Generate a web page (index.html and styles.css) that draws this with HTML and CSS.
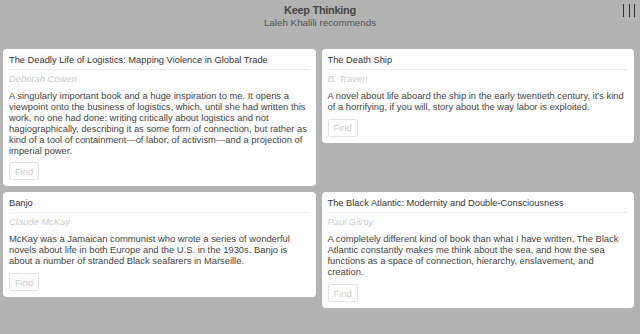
FILE: index.html
```html
<!DOCTYPE html>
<html lang="en">
<head>
  <meta charset="UTF-8" />
  <meta name="viewport" content="width=device-width, initial-scale=1" />
  <title>Keep Thinking</title>
  <link rel="stylesheet" href="styles.css">
</head>
<body>
  <header class="top">
    <h1>Keep Thinking</h1>
    <p class="sub">Laleh Khalili recommends</p>
    <button class="menu" aria-label="Menu">
      <span></span><span></span><span></span>
    </button>
  </header>

  <main class="books">
    <article class="book">
      <h2>The Deadly Life of Logistics: Mapping Violence in Global Trade</h2>
      <p class="author">Deborah Cowen</p>
      <p class="note">A singularly important book and a huge inspiration to me. It opens a viewpoint onto the business of logistics, which, until she had written this work, no one had done: writing critically about logistics and not hagiographically, describing it as some form of connection, but rather as kind of a tool of containment—of labor, of activism—and a projection of imperial power.</p>
      <button class="find">Find</button>
    </article>

    <article class="book">
      <h2>The Death Ship</h2>
      <p class="author">B. Traven</p>
      <p class="note">A novel about life aboard the ship in the early twentieth century, it’s kind of a horrifying, if you will, story about the way labor is exploited.</p>
      <button class="find">Find</button>
    </article>

    <article class="book">
      <h2>Banjo</h2>
      <p class="author">Claude McKay</p>
      <p class="note">McKay was a Jamaican communist who wrote a series of wonderful novels about life in both Europe and the U.S. in the 1930s. Banjo is about a number of stranded Black seafarers in Marseille.</p>
      <button class="find">Find</button>
    </article>

    <article class="book">
      <h2>The Black Atlantic: Modernity and Double-Consciousness</h2>
      <p class="author">Paul Gilroy</p>
      <p class="note">A completely different kind of book than what I have written, The Black Atlantic constantly makes me think about the sea, and how the sea functions as a space of connection, hierarchy, enslavement, and creation.</p>
      <button class="find">Find</button>
    </article>
  </main>
</body>
</html>
```

FILE: styles.css
```css
body {
  font-family: "Liberation Sans", Arial, sans-serif;
  background-color: #b3b3b3;
  margin: 0;
  padding: 0;
  color: #333;
}
.top {
  position: relative;
  text-align: center;
  padding-top: 3px;
  height: 46px;
  box-sizing: border-box;
}
.top h1 {
  margin: 0;
  font-size: 11px;
  line-height: 14px;
  font-weight: bold;
  letter-spacing: -0.3px;
  color: #444;
}
.top .sub {
  margin: 0;
  font-size: 9.8px;
  line-height: 11px;
  color: #555;
}
.menu {
  position: absolute;
  top: 4px;
  right: 5px;
  display: flex;
  gap: 4.5px;
  padding: 0;
  border: none;
  background: none;
}
.menu span {
  display: block;
  width: 1px;
  height: 13px;
  background-color: #333;
}
.books {
  display: grid;
  grid-template-columns: 1fr 1fr;
  gap: 6px;
  align-items: start;
  padding: 3px 6px 0 3px;
}
.book {
  background: white;
  border-radius: 4px;
  padding: 5px 6px 6px;
}
.book h2 {
  margin: 0;
  font-size: 9.3px;
  line-height: 12px;
  font-weight: normal;
  color: #333;
  padding-bottom: 3px;
  border-bottom: 1px solid #ebebeb;
}
.author {
  margin: 3px 0 0;
  font-size: 9.4px;
  line-height: 12px;
  font-style: italic;
  color: #ccc;
}
.note {
  margin: 6px 0 0;
  font-size: 9.4px;
  line-height: 10.9px;
  color: #444;
}
.find {
  display: block;
  margin-top: 6px;
  width: 30px;
  height: 18px;
  padding: 0;
  font-family: inherit;
  font-size: 9.4px;
  color: #ccc;
  background: white;
  border: 1px solid #e3e3e3;
  border-radius: 2px;
}
```
